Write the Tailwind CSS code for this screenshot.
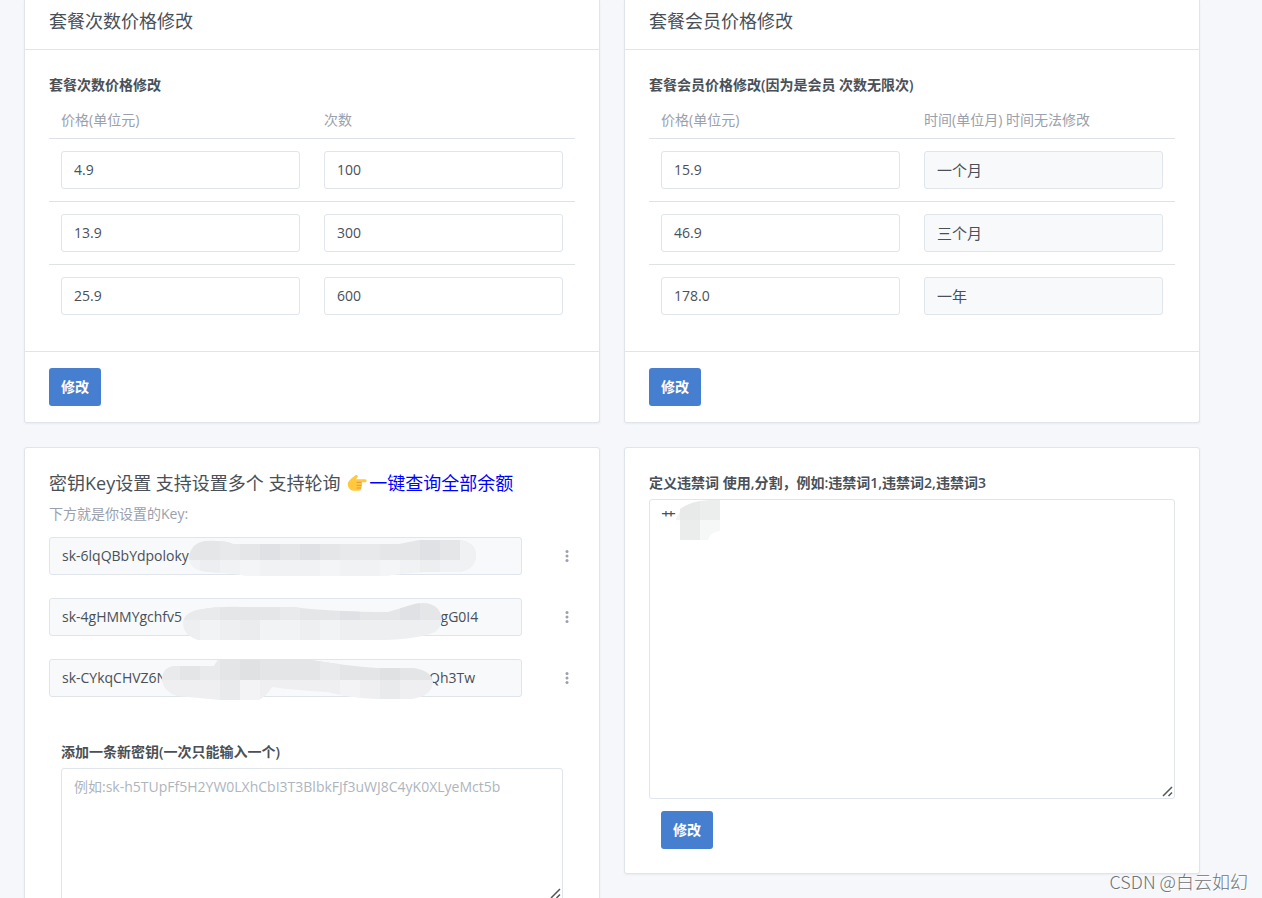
<!DOCTYPE html>
<html lang="zh-CN">
<head>
<meta charset="utf-8">
<meta name="viewport" content="width=device-width, initial-scale=1">
<title>套餐与密钥设置</title>
<script src="https://cdn.jsdelivr.net/npm/@tailwindcss/browser@4"></script>
</head>
<body class="bg-[#f5f7fb] font-['Open_Sans','Noto_Sans_CJK_SC',sans-serif] text-[14px] leading-[22px] text-[#495057]">
<div class="relative h-screen overflow-hidden">
<main class="grid grid-cols-2 items-start gap-6 pl-6 pr-[62px]">

  <form class="rounded-b-[3px] border border-t-0 border-[#e0e5ec] bg-white shadow-[0_1px_2px_rgba(0,0,0,0.05)]">
    <header class="border-b border-[#e0e5ec] px-6 pt-2.5 pb-[17px]"><h2 class="text-[18px] font-normal leading-[22px]">套餐次数价格修改</h2></header>
    <div class="p-6">
      <h3 class="mb-1.5 text-[14px] font-semibold">套餐次数价格修改</h3>
      <table class="w-full table-fixed border-collapse">
        <thead><tr class="h-9 text-left text-[#9aa0ac]"><th class="px-3 font-normal">价格(单位元)</th><th class="px-3 font-normal">次数</th></tr></thead>
        <tbody>
          <tr class="border-t border-[#dee2e6]"><td class="p-3"><input aria-label="价格" value="4.9" class="block h-[38px] w-full rounded-[3px] border border-[#e0e5ec] bg-white px-3"></td><td class="p-3"><input aria-label="次数" value="100" class="block h-[38px] w-full rounded-[3px] border border-[#e0e5ec] bg-white px-3"></td></tr>
          <tr class="border-t border-[#dee2e6]"><td class="p-3"><input aria-label="价格" value="13.9" class="block h-[38px] w-full rounded-[3px] border border-[#e0e5ec] bg-white px-3"></td><td class="p-3"><input aria-label="次数" value="300" class="block h-[38px] w-full rounded-[3px] border border-[#e0e5ec] bg-white px-3"></td></tr>
          <tr class="border-t border-[#dee2e6]"><td class="p-3"><input aria-label="价格" value="25.9" class="block h-[38px] w-full rounded-[3px] border border-[#e0e5ec] bg-white px-3"></td><td class="p-3"><input aria-label="次数" value="600" class="block h-[38px] w-full rounded-[3px] border border-[#e0e5ec] bg-white px-3"></td></tr>
        </tbody>
      </table>
    </div>
    <footer class="border-t border-[#e0e5ec] px-6 py-4"><button type="button" class="block h-[38px] rounded-[3px] bg-[#467fcf] px-3 text-[14px] font-semibold text-white">修改</button></footer>
  </form>

  <form class="rounded-b-[3px] border border-t-0 border-[#e0e5ec] bg-white shadow-[0_1px_2px_rgba(0,0,0,0.05)]">
    <header class="border-b border-[#e0e5ec] px-6 pt-2.5 pb-[17px]"><h2 class="text-[18px] font-normal leading-[22px]">套餐会员价格修改</h2></header>
    <div class="p-6">
      <h3 class="mb-1.5 text-[14px] font-semibold">套餐会员价格修改(因为是会员 次数无限次)</h3>
      <table class="w-full table-fixed border-collapse">
        <thead><tr class="h-9 text-left text-[#9aa0ac]"><th class="px-3 font-normal">价格(单位元)</th><th class="px-3 font-normal">时间(单位月) 时间无法修改</th></tr></thead>
        <tbody>
          <tr class="border-t border-[#dee2e6]"><td class="p-3"><input aria-label="价格" value="15.9" class="block h-[38px] w-full rounded-[3px] border border-[#e0e5ec] bg-white px-3"></td><td class="p-3"><input aria-label="时间" readonly value="一个月" class="block h-[38px] w-full rounded-[3px] border border-[#e0e5ec] bg-[#f8f9fa] px-3 text-[15px]"></td></tr>
          <tr class="border-t border-[#dee2e6]"><td class="p-3"><input aria-label="价格" value="46.9" class="block h-[38px] w-full rounded-[3px] border border-[#e0e5ec] bg-white px-3"></td><td class="p-3"><input aria-label="时间" readonly value="三个月" class="block h-[38px] w-full rounded-[3px] border border-[#e0e5ec] bg-[#f8f9fa] px-3 text-[15px]"></td></tr>
          <tr class="border-t border-[#dee2e6]"><td class="p-3"><input aria-label="价格" value="178.0" class="block h-[38px] w-full rounded-[3px] border border-[#e0e5ec] bg-white px-3"></td><td class="p-3"><input aria-label="时间" readonly value="一年" class="block h-[38px] w-full rounded-[3px] border border-[#e0e5ec] bg-[#f8f9fa] px-3 text-[15px]"></td></tr>
        </tbody>
      </table>
    </div>
    <footer class="border-t border-[#e0e5ec] px-6 py-4"><button type="button" class="block h-[38px] rounded-[3px] bg-[#467fcf] px-3 text-[14px] font-semibold text-white">修改</button></footer>
  </form>

  <form class="rounded-[3px] border border-[#e0e5ec] bg-white p-6 shadow-[0_1px_2px_rgba(0,0,0,0.05)]">
    <h2 class="flex items-center whitespace-pre text-[18px] font-normal leading-[22px]"><span>密钥Key设置 支持设置多个 支持轮询 </span><svg class="mx-[2px] h-[18px] w-[20px]" viewBox="0 0 20 18" aria-hidden="true"><path fill="#ffc83d" d="M1 8.500C2.500 5.500 6 3 8.500 1.200c1.600-.8 2.900.7 2 2L9 5.200h9.200c1.900 0 1.900 3.100 0 3.100H14c1.600.5 1.500 2.500.3 2.900 1 .7.700 2.400-.4 2.700.7.900.200 2.400-1.100 2.600-2.500.5-6.300.5-8.300-.3C1.500 15 .2 11.500 1 8.500Z"/><path fill="none" stroke="#e19747" stroke-width="1" stroke-linecap="round" d="M10 8.400h4.200M10 11.300h4.300M10 14h3.900"/></svg><a href="#" class="text-[#0000ff]">一键查询全部余额</a></h2>
    <p class="mt-[9px] mb-3 text-[#9aa0ac]">下方就是你设置的Key:</p>
    <div class="flex flex-col gap-[23px]">
      <div class="flex items-center justify-between">
        <div class="relative w-[90%]">
          <input aria-label="密钥 1" readonly value="sk-6lqQBbYdpoloky" class="block h-[38px] w-full rounded-[3px] border border-[#e0e5ec] bg-[#f8f9fa] px-3">
          <svg class="absolute left-[140px] top-0 h-[40px] w-[290px]" viewBox="0 0 290 40" aria-hidden="true">
            <clipPath id="m1"><path d="M16 4 Q34 3 44 7H210L230 3H270Q287 5 287 19Q286 33 270 35H235Q210 37 195 39H60Q40 36 20 35Q0 34 0 20Q2 6 16 4Z"/></clipPath>
            <g clip-path="url(#m1)"><path fill="#e5e6e8" d="M0 0H290V23H0Z"/><path fill="#f1f2f4" d="M0 23H290V40H0Z"/><path fill="#e0e1e4" d="M71 0H91V23H71ZM111 0H131V23H111ZM231 0H251V23H231Z"/><path fill="#e8e9ea" d="M31 0H51V23H31ZM151 0H191V23H151Z"/><path fill="#edeef0" d="M11 23H31V40H11ZM231 23H251V40H231Z"/><path fill="#f4f5f6" d="M51 23H71V40H51ZM131 23H151V40H131ZM191 23H211V40H191Z"/><path fill="#f0f1f3" d="M271 0H290V40H271Z"/></g>
          </svg>
        </div>
        <button type="button" aria-label="密钥 1 菜单" class="flex h-6 w-4 items-center justify-center"><svg class="h-3 w-1" viewBox="0 0 4 12" fill="#9aa0ac"><circle cx="2" cy="1.500" r="1.500"/><circle cx="2" cy="6" r="1.500"/><circle cx="2" cy="10.500" r="1.500"/></svg></button>
      </div>
      <div class="flex items-center justify-between">
        <div class="relative w-[90%]">
          <input aria-label="密钥 2" readonly value="sk-4gHMMYgchfv5                                                                      IgG0I4" class="block h-[38px] w-full rounded-[3px] border border-[#e0e5ec] bg-[#f8f9fa] px-3">
          <svg class="absolute left-[134px] top-[3px] h-[40px] w-[260px]" viewBox="0 0 260 40" aria-hidden="true">
            <clipPath id="m2"><path d="M15 9Q35 5 60 6H110Q150 11 205 11L225 5Q245 -2 255 8Q264 22 252 31Q235 38 200 39H15Q0 34 0 22Q1 12 15 9Z"/></clipPath>
            <g clip-path="url(#m2)"><path fill="#e5e6e8" d="M0 0H260V19H0Z"/><path fill="#eeeff1" d="M0 19H260V40H0Z"/><path fill="#e9eaeb" d="M0 0H37V19H0ZM97 0H117V19H97Z"/><path fill="#e0e1e4" d="M157 0H177V19H157ZM217 0H237V19H217Z"/><path fill="#f2f3f5" d="M17 19H37V40H17ZM77 19H117V40H77ZM137 19H157V40H137Z"/><path fill="#ebecee" d="M57 19H77V40H57Z"/></g>
          </svg>
        </div>
        <button type="button" aria-label="密钥 2 菜单" class="flex h-6 w-4 items-center justify-center"><svg class="h-3 w-1" viewBox="0 0 4 12" fill="#9aa0ac"><circle cx="2" cy="1.500" r="1.500"/><circle cx="2" cy="6" r="1.500"/><circle cx="2" cy="10.500" r="1.500"/></svg></button>
      </div>
      <div class="flex items-center justify-between">
        <div class="relative w-[90%]">
          <input aria-label="密钥 3" readonly value="sk-CYkqCHVZ6N                                                                        Qh3Tw" class="block h-[38px] w-full rounded-[3px] border border-[#e0e5ec] bg-[#f8f9fa] px-3">
          <svg class="absolute -top-px left-[113px] h-[42px] w-[272px]" viewBox="0 0 272 42" aria-hidden="true">
            <clipPath id="m3"><path d="M12 8H52L56 2H150Q185 8 215 10H252Q270 13 271 24Q270 38 250 41H215Q190 40 165 34Q130 32 110 29Q103 41 95 42H58L15 38Q0 33 0 20Q2 9 12 8Z"/></clipPath>
            <g clip-path="url(#m3)"><path fill="#e4e5e7" d="M0 0H272V22H0Z"/><path fill="#efeff1" d="M0 22H272V42H0Z"/><path fill="#e9eaeb" d="M0 0H18V22H0ZM38 0H58V22H38ZM158 0H178V22H158Z"/><path fill="#e0e1e3" d="M78 0H98V22H78ZM218 0H238V22H218Z"/><path fill="#f3f3f5" d="M78 22H98V42H78ZM178 22H198V42H178Z"/><path fill="#e9eaec" d="M58 22H78V42H58ZM218 22H238V42H218Z"/></g>
          </svg>
        </div>
        <button type="button" aria-label="密钥 3 菜单" class="flex h-6 w-4 items-center justify-center"><svg class="h-3 w-1" viewBox="0 0 4 12" fill="#9aa0ac"><circle cx="2" cy="1.500" r="1.500"/><circle cx="2" cy="6" r="1.500"/><circle cx="2" cy="10.500" r="1.500"/></svg></button>
      </div>
    </div>
    <div class="mt-11 px-3">
      <label for="newkey" class="mb-[5px] block font-semibold">添加一条新密钥(一次只能输入一个)</label>
      <div class="relative">
        <textarea id="newkey" placeholder="例如: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" class="block h-[133px] w-full resize-none rounded-[3px] border border-[#e0e5ec] px-3 py-[7px] placeholder:text-[#adb5bd]"></textarea>
        <svg class="absolute bottom-[2px] right-[2px] h-[11px] w-[11px]" viewBox="0 0 11 11" fill="none" stroke="#555" stroke-width="1.500" aria-hidden="true"><path d="M1 10 10 1M6.500 10 10 6.500"/></svg>
      </div>
    </div>
  </form>

  <form class="rounded-[3px] border border-[#e0e5ec] bg-white p-6 shadow-[0_1px_2px_rgba(0,0,0,0.05)]">
    <label for="banned" class="mb-[5px] block font-semibold">定义违禁词 使用,分割，例如:违禁词1,违禁词2,违禁词3</label>
    <div class="relative">
      <textarea id="banned" class="block h-[300px] w-full resize-none rounded-[3px] border border-[#e0e5ec] px-[11px] py-1.5 text-[15px]">艹</textarea>
      <svg class="absolute left-[11px] top-0 h-[42px] w-[62px]" viewBox="0 0 62 42" aria-hidden="true"><path fill="#fff" d="M16 2H60V30H16Z"/><path fill="#f3f3f4" d="M16 20Q20 10 30 6V21H16Z"/><path fill="#e8e9e9" d="M20 21V10Q28 4 40 2V21Z"/><path fill="#eceded" d="M40 21V2L50 1H60V21Z"/><path fill="#ebeded" d="M20 21H40V41H20Z"/><path fill="#f6f7f7" d="M40 21H60V32Q50 33 48 41H40Z"/></svg>
      <svg class="absolute bottom-[2px] right-[2px] h-[11px] w-[11px]" viewBox="0 0 11 11" fill="none" stroke="#555" stroke-width="1.500" aria-hidden="true"><path d="M1 10 10 1M6.500 10 10 6.500"/></svg>
    </div>
    <button type="button" class="ml-3 mt-3 block h-[38px] rounded-[3px] bg-[#467fcf] px-3 text-[14px] font-semibold text-white">修改</button>
  </form>
</main>
<p class="absolute bottom-1.5 right-3.5 font-['Noto_Sans_CJK_SC',sans-serif] text-[18px] font-light text-[#707275] [text-shadow:1px_1px_0_#fff]">CSDN @白云如幻</p>
</div>
</body>
</html>
